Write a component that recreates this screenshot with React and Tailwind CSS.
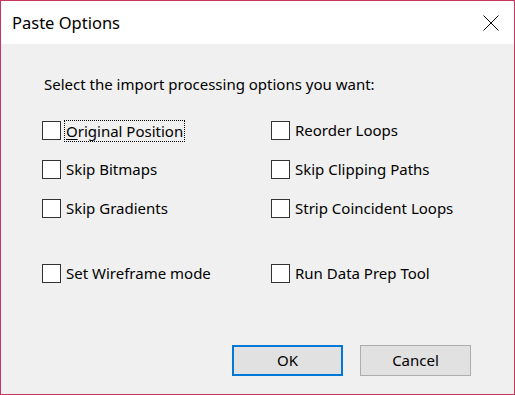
import React from "react";

const font = { fontFamily: '"Noto Sans", "Open Sans", sans-serif' };

function Box() {
  return <div className="w-[19px] h-[19px] shrink-0 border border-[#333333] bg-white" />;
}

function Option({ label, focused }) {
  return (
    <div className="flex h-[19px] items-center">
      <Box />
      {focused ? (
        <span className="ml-[3px] border border-dotted border-black px-px leading-[20px]">
          <span className="underline underline-offset-2">O</span>
          {label.slice(1)}
        </span>
      ) : (
        <span className="ml-[5px] leading-[19px]">{label}</span>
      )}
    </div>
  );
}

export default function App() {
  return (
    <div
      className="w-[515px] h-[395px] border border-[#c9365f] bg-[#f0f0f0] flex flex-col text-black overflow-hidden"
      style={font}
    >
      <div className="h-[43px] shrink-0 bg-white flex items-center justify-between pl-[11px] pr-[15px]">
        <span className="text-[16.5px] leading-none mt-[2px]">Paste Options</span>
        <svg width="16" height="16" viewBox="0 0 16 16">
          <path d="M0.5 0.5 L15.5 15.5 M15.5 0.5 L0.5 15.5" stroke="#000" strokeWidth="1" fill="none" />
        </svg>
      </div>
      <div className="flex flex-col pl-[41px] text-[15px]">
        <div className="mt-[30px] pl-[2px] leading-[20px]">Select the import processing options you want:</div>
        <div className="mt-[27px] grid grid-cols-[229px_auto] gap-y-[20px]">
          <Option label="Original Position" focused />
          <Option label="Reorder Loops" />
          <Option label="Skip Bitmaps" />
          <Option label="Skip Clipping Paths" />
          <Option label="Skip Gradients" />
          <Option label="Strip Coincident Loops" />
        </div>
        <div className="mt-[46px] grid grid-cols-[229px_auto]">
          <Option label="Set Wireframe mode" />
          <Option label="Run Data Prep Tool" />
        </div>
        <div className="mt-[62px] flex gap-[17px] pl-[190px]">
          <button className="w-[111px] h-[31px] border-2 border-[#0078d7] bg-[#e1e1e1] text-[15px]">OK</button>
          <button className="w-[111px] h-[31px] border border-[#adadad] bg-[#e1e1e1] text-[15px]">Cancel</button>
        </div>
      </div>
    </div>
  );
}
